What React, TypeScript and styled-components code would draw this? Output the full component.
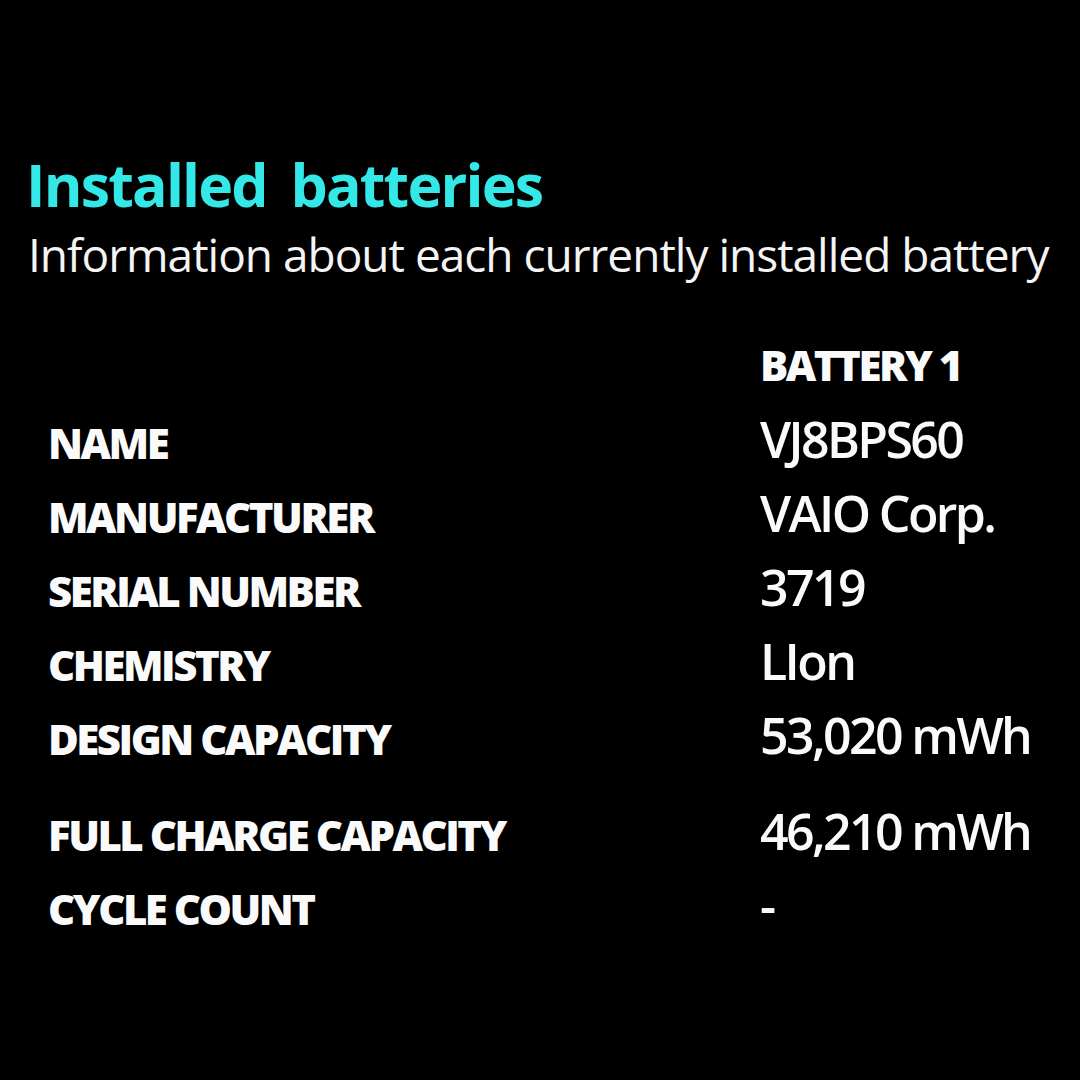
import React from "react";
import styled, { createGlobalStyle } from "styled-components";

const Global = createGlobalStyle`
  html, body { margin: 0; padding: 0; background: #000; }
  body { font-family: "Open Sans", "Noto Sans", sans-serif; }
`;

const Page = styled.div`
  width: 1080px;
  height: 1080px;
  background: #000;
  box-sizing: border-box;
  padding: 144px 0 0 26px;
  overflow: hidden;
`;

const Title = styled.h1`
  margin: 0;
  font-size: 59px;
  font-weight: 700;
  line-height: 80px;
  color: #33e8e6;
  letter-spacing: -1.8px;
  word-spacing: 10px;
`;

const Subtitle = styled.p`
  margin: 0 0 0 2px;
  font-size: 46px;
  font-weight: 400;
  line-height: 60px;
  color: #f4f4f4;
  letter-spacing: -1px;
`;

const Table = styled.div`
  margin-top: 44px;
  display: grid;
  grid-template-columns: 712px 1fr;
  padding-left: 22px;
`;

const Label = styled.div<{ $gap?: number }>`
  font-size: 42px;
  font-weight: 800;
  color: #fafafa;
  letter-spacing: -2.5px;
  line-height: 74px;
  height: 74px;
  margin-top: ${(p) => p.$gap ?? 0}px;
  padding-top: 4px;
  box-sizing: border-box;
`;

const Value = styled.div<{ $gap?: number; $head?: boolean }>`
  font-size: ${(p) => (p.$head ? 42 : 50)}px;
  font-weight: ${(p) => (p.$head ? 800 : 600)};
  color: #fafafa;
  letter-spacing: ${(p) => (p.$head ? -2.5 : -2.6)}px;
  line-height: 74px;
  height: 74px;
  margin-top: ${(p) => p.$gap ?? 0}px;
`;

const rows: [string, string, number?][] = [
  ["NAME", "VJ8BPS60"],
  ["MANUFACTURER", "VAIO Corp."],
  ["SERIAL NUMBER", "3719"],
  ["CHEMISTRY", "LIon"],
  ["DESIGN CAPACITY", "53,020 mWh"],
  ["FULL CHARGE CAPACITY", "46,210 mWh", 22],
  ["CYCLE COUNT", "-"],
];

export default function App() {
  return (
    <>
      <Global />
      <Page>
        <Title>Installed batteries</Title>
        <Subtitle>Information about each currently installed battery</Subtitle>
        <Table>
          <Label />
          <Value $head>BATTERY 1</Value>
          {rows.map(([l, v, g]) => (
            <React.Fragment key={l}>
              <Label $gap={g}>{l}</Label>
              <Value $gap={g}>{v}</Value>
            </React.Fragment>
          ))}
        </Table>
      </Page>
    </>
  );
}
